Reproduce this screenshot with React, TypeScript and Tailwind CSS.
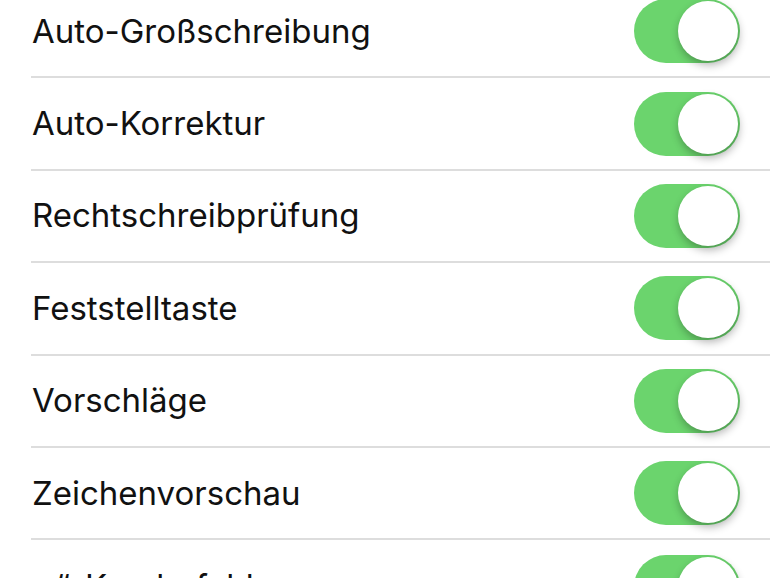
import React from "react";

const rows = [
  "Auto-Großschreibung",
  "Auto-Korrektur",
  "Rechtschreibprüfung",
  "Feststelltaste",
  "Vorschläge",
  "Zeichenvorschau",
  "„.“-Kurzbefehl",
];

const Toggle: React.FC = () => (
  <div className="relative h-[64px] w-[106px] shrink-0 rounded-full bg-[#6bd46d]">
    {/* knob */}
    <div className="absolute right-[2px] top-[2px] h-[60px] w-[60px] rounded-full bg-white shadow-[1px_4px_8px_rgba(0,0,0,0.3)]" />
  </div>
);

export default function App() {
  return (
    <div
      className="h-[578px] w-[770px] overflow-hidden bg-white"
      style={{ fontFamily: "Inter, 'Noto Sans', sans-serif" }}
    >
      <div className="-mt-[14px] flex flex-col">
        {rows.map((label, i) => (
          <div
            key={label}
            className={`ml-[31px] flex h-[92.4px] items-center justify-between pl-px pr-[30px] ${
              i < rows.length - 1 ? "border-b-2 border-[#dddddd]" : ""
            }`}
          >
            <span className="text-[33px] leading-none text-[#111]">{label}</span>
            <Toggle />
          </div>
        ))}
      </div>
    </div>
  );
}
